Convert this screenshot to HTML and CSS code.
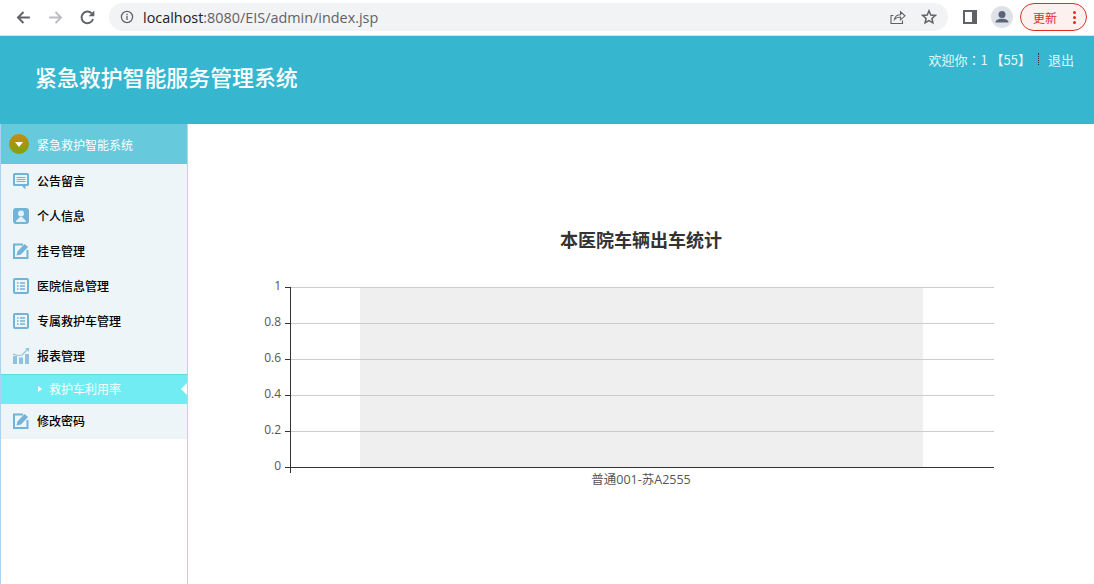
FILE: index.html
```html
<!DOCTYPE html>
<html lang="zh">
<head>
<meta charset="utf-8">
<title>紧急救护智能服务管理系统</title>
<link rel="stylesheet" href="styles.css">
</head>
<body>
<div class="browser">
  <svg class="nav-icon" viewBox="0 0 16 16"><path d="M14 8H3M8 2.800 2.800 8 8 13.200" fill="none" stroke="#5f6368" stroke-width="1.800"/></svg>
  <svg class="nav-icon" viewBox="0 0 16 16"><path d="M2 8h11M8 2.800 13.200 8 8 13.200" fill="none" stroke="#bcbec1" stroke-width="1.800"/></svg>
  <svg class="nav-icon" viewBox="0 0 16 16"><path d="M13.200 9.400A5.500 5.500 0 1 1 12 4.200" fill="none" stroke="#5f6368" stroke-width="1.800"/><path d="M14.400 1.400v5.400H9z" fill="#5f6368"/></svg>
  <div class="omnibox">
    <svg class="info" viewBox="0 0 14 14"><circle cx="7" cy="7" r="5.600" fill="none" stroke="#5f6368" stroke-width="1.300"/><path d="M7 6v4M7 3.800v1.400" stroke="#5f6368" stroke-width="1.300"/></svg>
    <span class="url">localhost<span class="url-dim">:8080/EIS/admin/index.jsp</span></span>
    <svg class="share" viewBox="0 0 16 16"><path d="M3.500 6.500H1v8h11.500v-3M4.500 10.500c.5-3 3-4.700 6-4.700V2.800l4.500 4-4.500 4V8c-2.500 0-4.500.8-6 2.500z" fill="none" stroke="#5f6368" stroke-width="1.100"/></svg>
    <svg class="star" viewBox="0 0 16 16"><path d="M8 1.800 9.800 6l4.500.4-3.400 3 1 4.400L8 11.500l-3.900 2.300 1-4.400-3.400-3L6.200 6z" fill="none" stroke="#5f6368" stroke-width="1.500"/></svg>
  </div>
  <svg class="panel" viewBox="0 0 14 14"><path d="M0 0h14v14H0z" fill="#5f6368"/><path d="M2 2h7v10H2z" fill="#fff"/></svg>
  <div class="avatar"><svg viewBox="0 0 22 22"><circle cx="11" cy="8.500" r="3.500" fill="#5b6478"/><path d="M4.500 16.500c0-2.500 3-3.700 6.500-3.700s6.500 1.200 6.500 3.700z" fill="#5b6478"/></svg></div>
  <div class="update"><span>更新</span><span class="dots"><i></i><i></i><i></i></span></div>
</div>

<header class="banner">
  <h1>紧急救护智能服务管理系统</h1>
  <div class="user"><span lang="zh-TW">欢迎你：1 【55】</span><span class="sep"></span><span>退出</span></div>
</header>

<div class="main">
  <nav class="side">
    <div class="side-head">
      <span class="toggle"><i></i></span>
      <span>紧急救护智能系统</span>
    </div>
    <a class="item">
      <svg viewBox="0 0 16 16"><path d="M1.500 0h13A1.500 1.500 0 0 1 16 1.500v10a1.500 1.500 0 0 1-1.500 1.500H12.500v3.500L9 13H1.500A1.500 1.500 0 0 1 0 11.500v-10A1.500 1.500 0 0 1 1.500 0z" fill="#72b3d8"/><path d="M2 2h12v9H2z" fill="#eaf4f9"/><path d="M3.500 4.500h9M3.500 6.500h9M3.500 8.500h9" stroke="#72b3d8" stroke-width="1.200"/></svg>
      公告留言
    </a>
    <a class="item">
      <svg viewBox="0 0 16 16"><rect width="16" height="16" rx="3" fill="#72b3d8"/><circle cx="8" cy="5.500" r="3" fill="#e4f1f8"/><path d="M3 14c.3-3 3-3 3.500-5h3c.5 2 3.200 2 3.500 5z" fill="#e4f1f8"/></svg>
      个人信息
    </a>
    <a class="item">
      <svg viewBox="0 0 16 16"><path d="M10 1.500H1v13.500h13.500V7" fill="none" stroke="#72b3d8" stroke-width="2"/><path d="M3.500 12.500 4.500 8.500 11.500 1 15 4 8 11.500z" fill="#72b3d8"/></svg>
      挂号管理
    </a>
    <a class="item">
      <svg viewBox="0 0 16 16"><rect x="1" y="1" width="14" height="14" rx="1" fill="none" stroke="#72b3d8" stroke-width="2"/><path d="M4 5h1.500M7 5h5M4 8h1.500M7 8h5M4 11h1.500M7 11h5" stroke="#72b3d8" stroke-width="1.500"/></svg>
      医院信息管理
    </a>
    <a class="item">
      <svg viewBox="0 0 16 16"><rect x="1" y="1" width="14" height="14" rx="1" fill="none" stroke="#72b3d8" stroke-width="2"/><path d="M4 5h1.500M7 5h5M4 8h1.500M7 8h5M4 11h1.500M7 11h5" stroke="#72b3d8" stroke-width="1.500"/></svg>
      专属救护车管理
    </a>
    <a class="item">
      <svg viewBox="0 0 16 16"><path d="M0 8h4v8H0zM6 9.500h4V16H6zM12 6h4v10h-4z" fill="#8fc2e0"/><path d="M0 6 5 7.500 9 7 14 2" fill="none" stroke="#8fc2e0" stroke-width="1.200"/><path d="M12 0h4v4z" fill="#8fc2e0"/></svg>
      报表管理
    </a>
    <a class="sub"><i class="sub-arrow"></i>救护车利用率</a>
    <a class="item">
      <svg viewBox="0 0 16 16"><path d="M10 1.500H1v13.500h13.500V7" fill="none" stroke="#72b3d8" stroke-width="2"/><path d="M3.500 12.500 4.500 8.500 11.500 1 15 4 8 11.500z" fill="#72b3d8"/></svg>
      修改密码
    </a>
  </nav>

  <main class="content">
    <svg class="chart" viewBox="0 0 906 460" width="906" height="460">
      <text class="chart-title" x="453" y="123" text-anchor="middle">本医院车辆出车统计</text>
      <rect class="band" x="172" y="163" width="563" height="180"/>
      <path class="grid" d="M102 163.500H806M102 199.500H806M102 235.500H806M102 271.500H806M102 307.500H806"/>
      <path class="axis" d="M102.500 163V349M97 163.500H102M97 199.500H102M97 235.500H102M97 271.500H102M97 307.500H102M97 343.500H806"/>
      <text class="tick" x="93" y="166" text-anchor="end">1</text>
      <text class="tick" x="93" y="202" text-anchor="end">0.8</text>
      <text class="tick" x="93" y="238" text-anchor="end">0.6</text>
      <text class="tick" x="93" y="274" text-anchor="end">0.4</text>
      <text class="tick" x="93" y="310" text-anchor="end">0.2</text>
      <text class="tick" x="93" y="346" text-anchor="end">0</text>
      <text class="tick-label" x="453" y="360" text-anchor="middle">普通001-苏A2555</text>
    </svg>
  </main>
</div>
</body>
</html>
```

FILE: styles.css
```css
* { box-sizing: border-box; }
html, body { margin: 0; padding: 0; height: 100%; overflow: hidden; }
body {
  display: flex;
  flex-direction: column;
  background: #fff;
  font-family: "Noto Sans CJK SC", "Noto Sans", sans-serif;
}

.browser {
  height: 36px;
  flex: none;
  display: flex;
  align-items: center;
  padding: 0 7px 1px 15px;
  background: #fff;
  border-bottom: 1px solid #dfe1e5;
}
.nav-icon { width: 17px; height: 17px; margin-right: 15px; flex: none; }
.omnibox {
  width: 839px;
  height: 28px;
  margin-left: -2px;
  display: flex;
  align-items: center;
  padding: 0 11px;
  background: #f1f3f4;
  border-radius: 14px;
  flex: none;
}
.info { width: 14px; height: 14px; flex: none; margin-right: 9px; }
.url { font-family: "Open Sans", sans-serif; font-size: 14.400px; color: #202124; flex: 1; }
.url-dim { color: #5f6368; }
.share { width: 16px; height: 16px; margin-right: 15px; flex: none; }
.star { width: 16px; height: 16px; flex: none; }
.panel { width: 14px; height: 14px; margin-left: 15px; flex: none; }
.avatar {
  width: 22px; height: 22px;
  margin-left: 14px;
  border-radius: 50%;
  background: #dee1e6;
  flex: none;
}
.avatar svg { display: block; width: 22px; height: 22px; }
.update {
  width: 67px; height: 28px;
  margin-left: 7px;
  display: flex;
  align-items: center;
  padding: 0 10px 0 12px;
  justify-content: space-between;
  border: 1px solid #d93025;
  border-radius: 14px;
  background: #fdf1f0;
  color: #d93025;
  font-size: 12px;
  flex: none;
}
.dots { display: flex; flex-direction: column; gap: 2px; }
.dots i { width: 3px; height: 3px; border-radius: 50%; background: #d93025; }

.banner {
  height: 88px;
  flex: none;
  display: flex;
  justify-content: space-between;
  background: #36b7cf;
  color: #fff;
  padding: 0 20px 0 35px;
}
.banner h1 { margin: 23px 0 0; font-size: 21.900px; line-height: 36px; font-weight: 500; }
.user {
  margin-top: 13px;
  display: flex;
  align-items: center;
  height: 20px;
  font-family: "Noto Sans CJK TC", "Noto Sans", sans-serif;
  font-size: 13px;
  color: #e4f6fa;
}
.sep { height: 12px; border-left: 1px dotted #333; margin: 0 9px 0 7px; }

.main { flex: 1; display: flex; min-height: 0; }
.side {
  width: 188px;
  flex: none;
  border-left: 1px solid #a9d3f2;
  border-right: 1px solid #b7d6e6;
}
.side-head {
  height: 40px;
  display: flex;
  align-items: center;
  gap: 8px;
  padding-left: 8px;
  background: #66c9dc;
  color: #fff;
  font-size: 12px;
}
.toggle {
  width: 20px; height: 20px;
  border-radius: 50%;
  background: linear-gradient(#c98a10, #7fa30e);
  display: flex;
  align-items: center;
  justify-content: center;
}
.toggle i {
  width: 0; height: 0;
  border-left: 4px solid transparent;
  border-right: 4px solid transparent;
  border-top: 5px solid #fff;
}
.item {
  height: 35px;
  display: flex;
  align-items: center;
  gap: 8px;
  padding: 0 0 2px 12px;
  background: #edf5f9;
  color: #000;
  font-size: 12px;
  font-weight: 500;
}
.item svg { width: 16px; height: 16px; flex: none; }
.sub {
  position: relative;
  height: 30px;
  display: flex;
  align-items: center;
  padding: 0 0 2px 37px;
  background: #70ecf2;
  border-top: 1px solid #5bdbe6;
  color: #fff;
  font-size: 12px;
}
.sub-arrow {
  width: 0; height: 0;
  margin-right: 7px;
  border-top: 3.500px solid transparent;
  border-bottom: 3.500px solid transparent;
  border-left: 4px solid #fff;
}
.sub::after {
  content: "";
  position: absolute;
  right: 0;
  top: 8px;
  border-top: 6px solid transparent;
  border-bottom: 6px solid transparent;
  border-right: 6px solid #fff;
}

.content { flex: 1; min-width: 0; }
.chart { display: block; }
.chart-title { font-size: 18px; font-weight: 700; fill: #333; }
.band { fill: #efefef; }
.grid { fill: none; stroke: #ccc; stroke-width: 1; }
.axis { fill: none; stroke: #333; stroke-width: 1; }
.tick { font-family: "Open Sans", "Noto Sans CJK SC", sans-serif; font-size: 12px; fill: #555; }
.tick-label { font-family: "Open Sans", "Noto Sans CJK SC", sans-serif; font-size: 12.500px; fill: #555; }
```
